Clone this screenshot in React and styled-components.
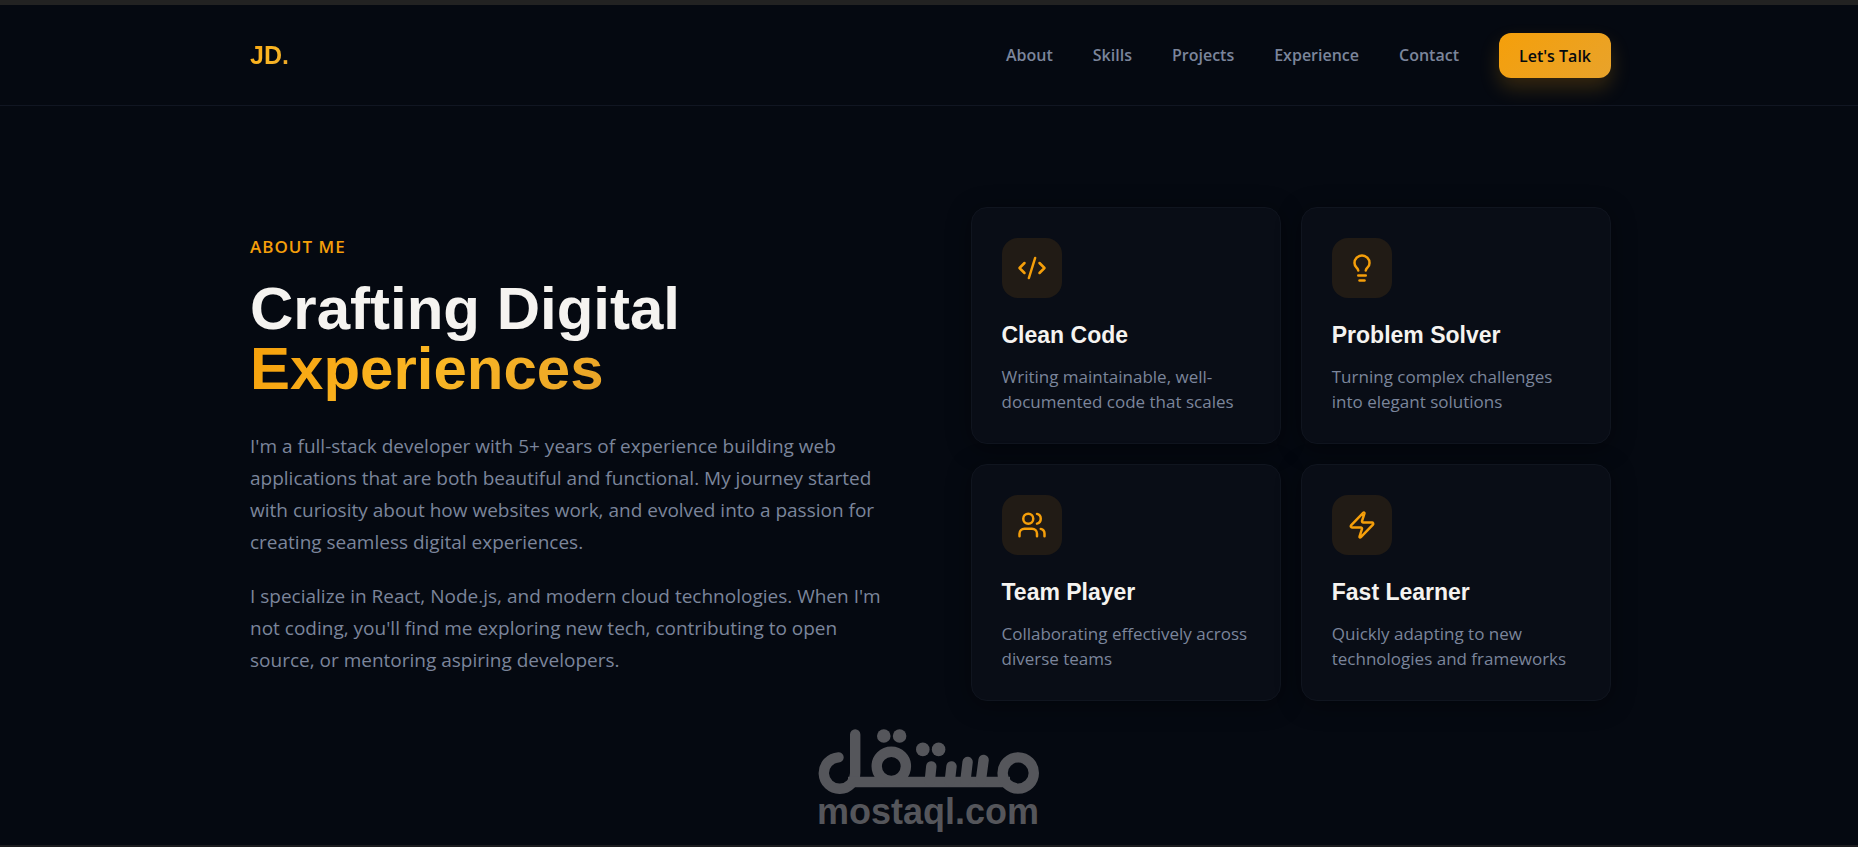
import React from 'react'
import styled, { createGlobalStyle } from 'styled-components';
import { CodeXml, Lightbulb, Users, Zap } from 'lucide-react';

const GlobalStyle = createGlobalStyle`
    *, *::before, *::after {
        box-sizing:border-box;
    }
    body {
        margin:0;
        background-color:#050911;
        color:#f5f3f0;
        font-family:'Open Sans', 'Noto Sans', sans-serif;
    }
    h1, h2, h3, p {
        margin:0;
    }
`;

const Page = styled.div`
    display:flex;
    flex-direction:column;
    min-height:100vh;
    border-top:5px solid #222222;
    border-bottom:2px solid #1c1c1f;
`;

const Container = styled.div`
    width:100%;
    max-width:1412px;
    margin:0 auto;
    padding:0 24px 0 27px;
`;

const Header = styled.header`
    border-bottom:1px solid #111622;
`;

const HeaderRow = styled(Container)`
    display:flex;
    align-items:center;
    justify-content:space-between;
    height:100px;
`;

const Logo = styled.a`
    font-family:'Liberation Sans', Arial, sans-serif;
    font-size:25px;
    font-weight:700;
    line-height:36px;
    text-decoration:none;
    color:transparent;
    background:linear-gradient(135deg, #f59f0a, #fbb724 50%, #e8a328);
    background-clip:text;
`;

const Nav = styled.nav`
    display:flex;
    align-items:center;
    gap:40px;
`;

const NavLink = styled.a`
    color:#7b859b;
    font-size:16px;
    font-weight:600;
    text-decoration:none;
`;

const TalkButton = styled.button`
    height:45px;
    padding:2px 20px 0;
    border:0;
    border-radius:12px;
    background:linear-gradient(135deg, #f59f0a, #e8a32b);
    box-shadow:0 10px 20px rgba(245, 159, 10, 0.2);
    color:#05090f;
    font-family:inherit;
    font-size:16px;
    font-weight:600;
    cursor:pointer;
`;

const About = styled(Container).attrs({ as: 'section' })`
    display:grid;
    grid-template-columns:1fr 1fr;
    align-items:center;
    gap:80px;
    padding-top:101px;
    padding-bottom:28px;
`;

const Eyebrow = styled.p`
    color:#f59f0a;
    font-size:17px;
    font-weight:600;
    line-height:28px;
    letter-spacing:1px;
    text-transform:uppercase;
`;

const Title = styled.h2`
    margin-top:18px;
    font-family:'Liberation Sans', Arial, sans-serif;
    font-size:60px;
    font-weight:700;
    line-height:60px;
`;

const Highlight = styled.span`
    color:transparent;
    background:linear-gradient(135deg, #f59f0a, #fbb724 50%, #e8a328);
    background-clip:text;
`;

const Story = styled.div`
    display:flex;
    flex-direction:column;
    gap:22px;
    margin-top:31px;
`;

const Paragraph = styled.p`
    color:#7b859b;
    font-size:19px;
    line-height:32px;
`;

const Cards = styled.div`
    display:grid;
    grid-template-columns:1fr 1fr;
    gap:20px;
`;

const Card = styled.article`
    padding:30px 30px 29px;
    border:1px solid #10151f;
    border-radius:16px;
    background-color:#090d16;
    box-shadow:0 4px 24px rgba(0, 0, 0, 0.4);
`;

const IconBox = styled.div`
    display:flex;
    align-items:center;
    justify-content:center;
    width:60px;
    height:60px;
    border-radius:16px;
    background-color:#211b15;
    color:#f59f0a;
`;

const CardTitle = styled.h3`
    margin-top:22px;
    font-family:'Liberation Sans', Arial, sans-serif;
    font-size:23px;
    font-weight:700;
    line-height:30px;
`;

const CardText = styled.p`
    margin-top:14px;
    color:#7b859b;
    font-size:17px;
    line-height:25px;
`;

const Footer = styled.footer`
    display:flex;
    justify-content:center;
`;

const Watermark = styled.svg`
    display:block;
    width:224px;
    height:108px;
    fill:none;
    stroke:#55565b;
`;

const WatermarkText = styled.text`
    fill:#55565b;
    stroke:none;
    font-family:'Liberation Sans', Arial, sans-serif;
    font-size:36px;
    font-weight:700;
`;

const links = ['About', 'Skills', 'Projects', 'Experience', 'Contact'];

const features = [
    { icon: CodeXml, title: 'Clean Code', text: 'Writing maintainable, well-documented code that scales' },
    { icon: Lightbulb, title: 'Problem Solver', text: 'Turning complex challenges into elegant solutions' },
    { icon: Users, title: 'Team Player', text: 'Collaborating effectively across diverse teams' },
    { icon: Zap, title: 'Fast Learner', text: 'Quickly adapting to new technologies and frameworks' },
];

const Mostaql = () => (
    <Watermark viewBox="0 0 224 108" role="img" aria-label="mostaql.com">
        <g strokeWidth="10.4" strokeLinecap="round">
            <path d="M21.5 28.4 A15.7 15.7 0 1 0 38.2 44 V5.5" />
            <path d="M31 53 H193" strokeLinecap="butt" />
            <circle cx="74.3" cy="37.3" r="14.6" />
            <circle cx="201.2" cy="44" r="15.6" />
            <path d="M112.8 52 L114.3 37.4 M132.8 52 L134.5 37.4 M148.4 52 L150.6 33 M163.8 52 L166.6 31" />
        </g>
        <g fill="#55565b" stroke="none">
            <circle cx="66.8" cy="7" r="6.8" />
            <circle cx="82.6" cy="7" r="6.8" />
            <circle cx="105.8" cy="20.4" r="6.8" />
            <circle cx="121.6" cy="20.4" r="6.8" />
        </g>
        <WatermarkText x="0" y="95">mostaql.com</WatermarkText>
    </Watermark>
)

const App = () => {
    return (
        <Page>
            <GlobalStyle />
            <Header>
                <HeaderRow>
                    <Logo href="#">JD.</Logo>
                    <Nav>
                        {links.map(link => (
                            <NavLink key={link} href={'#' + link.toLowerCase()}>{link}</NavLink>
                        ))}
                        <TalkButton type="button">Let's Talk</TalkButton>
                    </Nav>
                </HeaderRow>
            </Header>
            <About id="about">
                <div>
                    <Eyebrow>About Me</Eyebrow>
                    <Title>Crafting Digital<br /><Highlight>Experiences</Highlight></Title>
                    <Story>
                        <Paragraph>
                            I'm a full-stack developer with 5+ years of experience building web
                            applications that are both beautiful and functional. My journey started
                            with curiosity about how websites work, and evolved into a passion for
                            creating seamless digital experiences.
                        </Paragraph>
                        <Paragraph>
                            I specialize in React, Node.js, and modern cloud technologies. When I'm
                            not coding, you'll find me exploring new tech, contributing to open
                            source, or mentoring aspiring developers.
                        </Paragraph>
                    </Story>
                </div>
                <Cards>
                    {features.map(({ icon: Icon, title, text }) => (
                        <Card key={title}>
                            <IconBox><Icon size={30} strokeWidth={2} /></IconBox>
                            <CardTitle>{title}</CardTitle>
                            <CardText>{text}</CardText>
                        </Card>
                    ))}
                </Cards>
            </About>
            <Footer>
                <Mostaql />
            </Footer>
        </Page>
    )
}

export default App
